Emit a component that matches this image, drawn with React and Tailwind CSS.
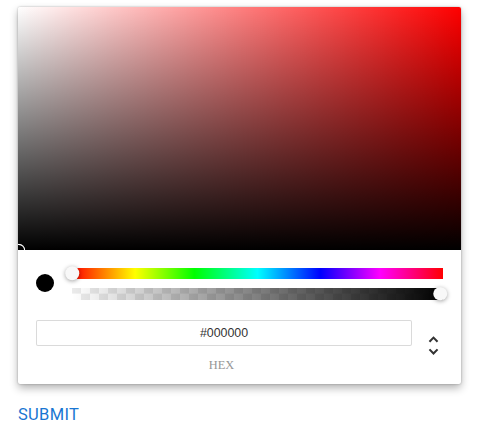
import React from 'react';

const Thumb = ({ className }) => (
  <div
    className={`absolute top-1/2 h-[13.5px] w-[13.5px] -translate-x-1/2 -translate-y-1/2 rounded-full bg-[#f8f8f8] shadow-[0_1px_4px_0_rgba(0,0,0,0.37)] ${className}`}
  />
);

const ColorPicker = () => {
  return (
    <div className="w-[443px] rounded-[2px] bg-white shadow-[0_0_2px_rgba(0,0,0,0.3),0_4px_8px_rgba(0,0,0,0.3)]">
      {/* Saturation */}
      <div className="relative h-[243px] overflow-hidden rounded-t-[2px] bg-[#f00] [background-image:linear-gradient(to_top,#000,rgba(0,0,0,0)),linear-gradient(to_right,#fff,rgba(255,255,255,0))]">
        <div className="absolute bottom-0 left-0 h-[13.5px] w-[13.5px] -translate-x-1/2 translate-y-1/2 rounded-full shadow-[inset_0_0_0_1.2px_#fff]" />
      </div>

      {/* Body */}
      <div className="px-[18px] pt-[18px] pb-[13.5px]">
        <div className="flex">
          <div className="w-[36px] shrink-0">
            <div className="mt-[6px] h-[18px] w-[18px] rounded-full bg-black" />
          </div>
          <div className="flex-1">
            <div className="relative h-[11.25px] [background-image:linear-gradient(to_right,#f00_0%,#ff0_17%,#0f0_33%,#0ff_50%,#00f_67%,#f0f_83%,#f00_100%)]">
              <Thumb className="left-0 top-[5px]" />
            </div>
            <div className="relative mt-[9px] h-[11.25px] [background:linear-gradient(to_right,rgba(0,0,0,0),#000),conic-gradient(#fff_90deg,#ebebeb_90deg_180deg,#fff_180deg_270deg,#ebebeb_270deg)_left_center/18px_18px]">
              <Thumb className="left-[calc(100%-3px)] top-[5.5px]" />
            </div>
          </div>
        </div>

        {/* Fields */}
        <div className="flex pt-[20px]">
          <div className="flex-1">
            <input
              readOnly
              value="#000000"
              className="block h-[26px] w-full rounded-[2px] bg-white text-center text-[12.4px] text-[#333] shadow-[inset_0_0_0_1px_#dadada] outline-none [font-family:'Liberation_Sans',Arial,sans-serif]"
            />
            <div className="mt-[13px] pr-[5px] text-center text-[12.4px] leading-[12.4px] uppercase text-[#969696] [font-family:'Liberation_Serif','Times_New_Roman',serif]">
              hex
            </div>
          </div>
          <div className="flex w-[31px] shrink-0 justify-end">
            <div className="mr-[-3px] mt-[13.5px]">
              <svg viewBox="0 0 24 24" className="h-[25px] w-[25px]">
                <path
                  fill="#333"
                  d="M12,18.17L8.83,15L7.42,16.41L12,21L16.59,16.41L15.17,15M12,5.83L15.17,9L16.58,7.59L12,3L7.41,7.59L8.83,9L12,5.83Z"
                />
              </svg>
            </div>
          </div>
        </div>
      </div>
    </div>
  );
};

export default function App() {
  return (
    <div className="min-h-screen bg-white pl-[18px] pt-[7px] [font-family:Roboto,'Liberation_Sans',sans-serif]">
      <ColorPicker />
      <button className="mt-[21px] block text-[16.5px] leading-[20px] tracking-[0.3px] text-[#1976d2] uppercase">
        Submit
      </button>
    </div>
  );
}
